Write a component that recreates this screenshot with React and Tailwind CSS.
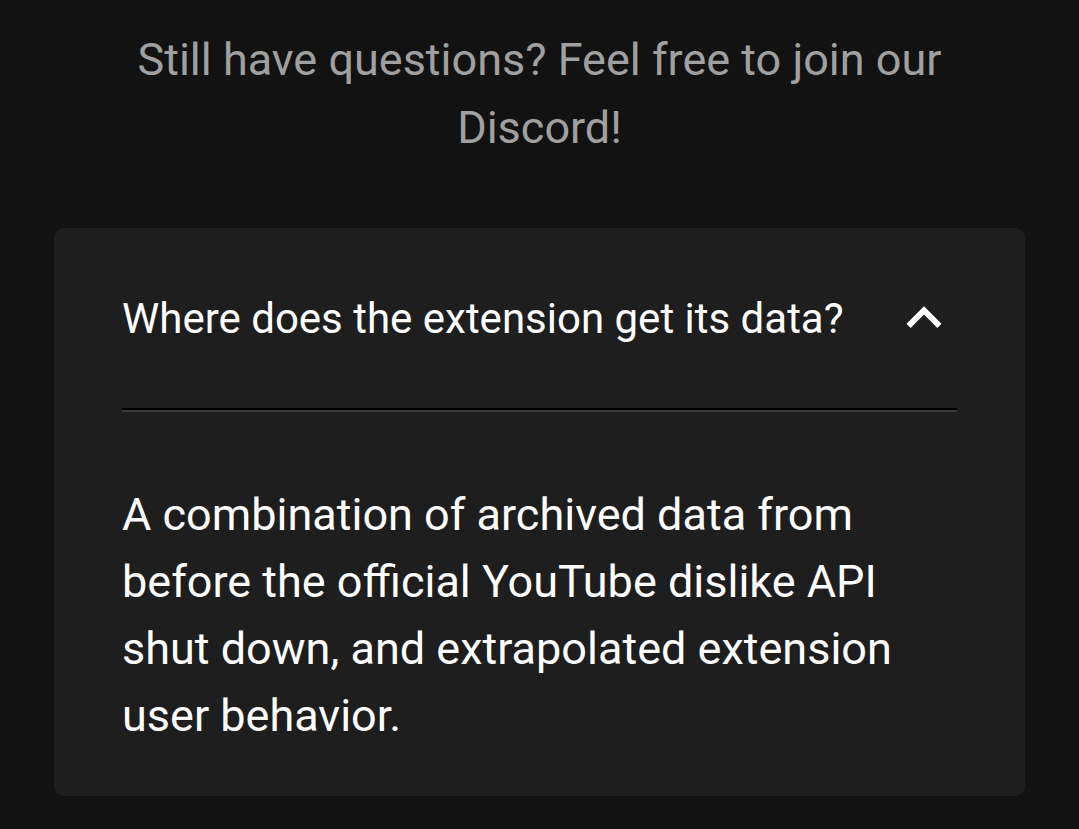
// FAQ block: intro line plus one expanded accordion panel.
export default function App() {
  return (
    <div className="min-h-screen bg-[#121212] font-['Roboto',sans-serif] px-[54px] pt-[26px] pb-[34px]">
      <p className="mx-auto max-w-[840px] text-center text-[45px] leading-[68px] text-[#a0a0a0]">
        Still have questions? Feel free to join our Discord!
      </p>

      <div className="mt-[66px] rounded-[10px] bg-[#1e1e1e] px-[68px] pb-[47px]">
        <button className="flex h-[180px] w-full items-center justify-between text-left">
          <span className="text-[42px] leading-[67px] text-white">
            Where does the extension get its data?
          </span>
          <svg viewBox="0 0 24 24" className="-mr-[2px] h-[70px] w-[70px] shrink-0 fill-white">
            <path d="M7.41,15.41L12,10.83L16.59,15.41L18,14L12,8L6,14L7.41,15.41Z" />
          </svg>
        </button>
        <div className="h-[2px] bg-black" />
        <div className="h-[2px] bg-[#3c3c3c]" />
        <p className="pt-[69px] text-[45px] leading-[67px] text-white">
          A combination of archived data from before the official YouTube dislike API shut down,
          and extrapolated extension user behavior.
        </p>
      </div>
    </div>
  );
}
